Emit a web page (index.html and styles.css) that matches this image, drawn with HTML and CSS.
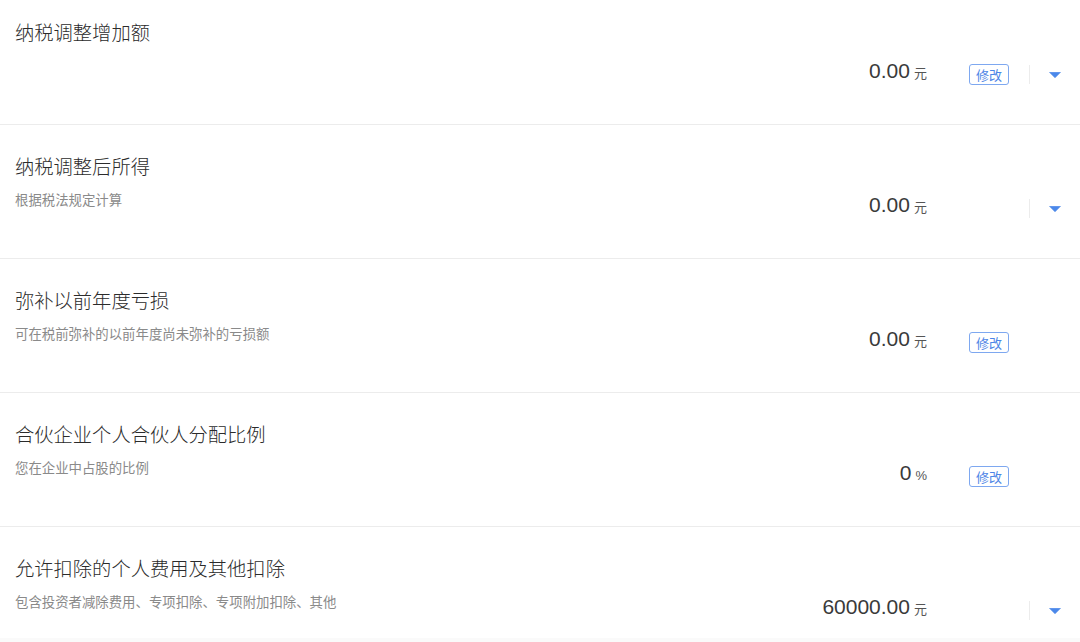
FILE: index.html
```html
<!DOCTYPE html>
<html lang="zh-CN">
<head>
  <meta charset="UTF-8">
  <meta name="viewport" content="width=device-width, initial-scale=1.0">
  <title>纳税调整</title>
  <link rel="stylesheet" href="styles.css">
</head>
<body>
  <div class="list">
    <div class="row">
      <div class="info">
        <div class="title">纳税调整增加额</div>
      </div>
      <div class="side">
        <div class="value">0.00<span class="unit">元</span></div>
        <button class="edit">修改</button>
        <span class="divider"></span>
        <svg class="arrow" width="12" height="6" viewBox="0 0 12 6"><path d="M0.5 0.3 H11.5 L6 5.8 Z" fill="#4b88ea" stroke="#4b88ea" stroke-width="0.6" stroke-linejoin="round"/></svg>
      </div>
    </div>

    <div class="row">
      <div class="info">
        <div class="title">纳税调整后所得</div>
        <div class="desc">根据税法规定计算</div>
      </div>
      <div class="side">
        <div class="value">0.00<span class="unit">元</span></div>
        <button class="edit hidden">修改</button>
        <span class="divider"></span>
        <svg class="arrow" width="12" height="6" viewBox="0 0 12 6"><path d="M0.5 0.3 H11.5 L6 5.8 Z" fill="#4b88ea" stroke="#4b88ea" stroke-width="0.6" stroke-linejoin="round"/></svg>
      </div>
    </div>

    <div class="row">
      <div class="info">
        <div class="title">弥补以前年度亏损</div>
        <div class="desc">可在税前弥补的以前年度尚未弥补的亏损额</div>
      </div>
      <div class="side">
        <div class="value">0.00<span class="unit">元</span></div>
        <button class="edit">修改</button>
        <span class="divider hidden"></span>
        <svg class="arrow hidden" width="12" height="6" viewBox="0 0 12 6"><path d="M0.5 0.3 H11.5 L6 5.8 Z" fill="#4b88ea"/></svg>
      </div>
    </div>

    <div class="row">
      <div class="info">
        <div class="title">合伙企业个人合伙人分配比例</div>
        <div class="desc">您在企业中占股的比例</div>
      </div>
      <div class="side">
        <div class="value">0<span class="unit">%</span></div>
        <button class="edit">修改</button>
        <span class="divider hidden"></span>
        <svg class="arrow hidden" width="12" height="6" viewBox="0 0 12 6"><path d="M0.5 0.3 H11.5 L6 5.8 Z" fill="#4b88ea"/></svg>
      </div>
    </div>

    <div class="row last">
      <div class="info">
        <div class="title">允许扣除的个人费用及其他扣除</div>
        <div class="desc">包含投资者减除费用、专项扣除、专项附加扣除、其他</div>
      </div>
      <div class="side">
        <div class="value">60000.00<span class="unit">元</span></div>
        <button class="edit hidden">修改</button>
        <span class="divider"></span>
        <svg class="arrow" width="12" height="6" viewBox="0 0 12 6"><path d="M0.5 0.3 H11.5 L6 5.8 Z" fill="#4b88ea" stroke="#4b88ea" stroke-width="0.6" stroke-linejoin="round"/></svg>
      </div>
    </div>
  </div>
</body>
</html>
```

FILE: styles.css
```css
body {
  margin: 0;
  padding: 0;
  background-color: #fafafa;
  font-family: "Liberation Sans", "Noto Sans CJK SC", sans-serif;
  color: #333;
  overflow: hidden;
}

.list {
  margin-top: -9px;
  background-color: #fff;
}

.row {
  display: flex;
  justify-content: space-between;
  height: 134px;
  box-sizing: border-box;
  padding: 0 19px 0 15px;
  border-bottom: 1px solid #ececec;
}

.row.last {
  height: 111px;
  border-bottom: none;
}

.info {
  padding-top: 29px;
}

.title {
  font-size: 19.3px;
  font-weight: 300;
  line-height: 28px;
  color: #2b2b2b;
}

.desc {
  margin-top: 9px;
  font-size: 13.4px;
  line-height: 20px;
  color: #8a8a8a;
}

.side {
  display: flex;
  align-items: center;
  align-self: flex-start;
  margin-top: 66.5px;
  height: 34px;
}

.value {
  font-size: 21px;
  line-height: 28px;
  padding-bottom: 5px;
  color: #3a3a3a;
}

.unit {
  margin-left: 4px;
  font-size: 13px;
  color: #555;
}

.edit {
  margin-left: 42px;
  width: 40px;
  height: 21px;
  padding: 0;
  border: 1px solid #7ea8f0;
  border-radius: 3px;
  background-color: #fff;
  color: #4d85e6;
  font-family: "Noto Sans CJK SC", sans-serif;
  font-size: 13px;
  line-height: 19px;
}

.divider {
  margin-left: 20px;
  width: 1px;
  height: 19px;
  background-color: #ececec;
}

.arrow {
  display: block;
  margin-left: 19px;
}

.hidden {
  visibility: hidden;
}
```
